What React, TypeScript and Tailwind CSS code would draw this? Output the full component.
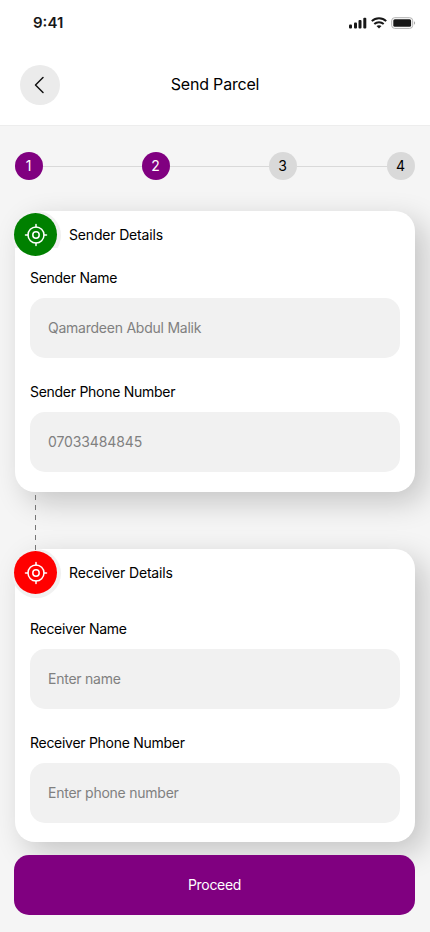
import type { ReactNode } from "react";

const Target = () => (
  <svg width="24" height="24" viewBox="0 0 24 24" fill="none" stroke="white" strokeWidth="1.5" strokeLinecap="round">
    <circle cx="12" cy="12" r="8" />
    <circle cx="12" cy="12" r="3.2" />
    <path d="M12 4V1.5M4 12H1.5M12 20v2.5M20 12h2.5" />
  </svg>
);

const Step = ({ n, active }: { n: number; active?: boolean }) => (
  <div className={`flex size-7 shrink-0 items-center justify-center rounded-full pr-px text-sm ${active ? "bg-[#800080] text-white" : "bg-[#d9d9d9] text-black"}`}>{n}</div>
);

const Line = ({ className }: { className: string }) => <div className={`mt-px h-px bg-[#d9d9d9] ${className}`} />;

const Field = ({ label, value, valueClass = "tracking-[-0.24px]" }: { label: string; value: string; valueClass?: string }) => (
  <div>
    <div className="h-5 text-sm leading-5 tracking-[-0.28px] whitespace-nowrap">{label}</div>
    <div className={`mt-2.5 flex h-[60px] items-center rounded-[15px] bg-[#f1f1f1] px-[18px] text-sm text-[#808080] ${valueClass}`}>{value}</div>
  </div>
);

const Card = ({ title, color, ringClass, className, children }: { title: string; color: string; ringClass: string; className: string; children: ReactNode }) => (
  <section className={`mx-[15px] rounded-[20px] bg-white px-[15px] shadow-[10px_10px_30px_rgba(0,0,0,0.2)] ${className}`}>
    <header className="relative -ml-4 flex h-12 items-start">
      <div className={`absolute top-0 -left-[2px] size-[49px] rounded-full bg-[#f1f1f1] ${ringClass}`} />
      <div className={`relative mt-[2px] flex size-[43px] items-center justify-center rounded-full ${color}`}>
        <Target />
      </div>
      <h2 className="ml-3 text-sm leading-[48px] tracking-[-0.17px]">{title}</h2>
    </header>
    {children}
  </section>
);

export default function App() {
  return (
    <main className="flex h-[932px] w-[430px] flex-col overflow-hidden bg-[#f5f5f5] font-['Inter','Liberation_Sans',sans-serif] text-black">
      <div className="h-[126px] shrink-0 border-b border-[#ededed] bg-white">
        <div className="flex h-[46px] items-center justify-between pr-[14px] pl-[33px]">
          <span className="text-[15px] font-semibold text-[#171717]">9:41</span>
          <div className="flex items-center gap-1">
            <svg width="18" height="12" viewBox="0 0 18 12" fill="#171717">
              <rect x="0" y="7.5" width="3" height="4" rx="1" />
              <rect x="5" y="5.5" width="3" height="6" rx="1" />
              <rect x="9.5" y="3" width="3" height="8.5" rx="1" />
              <rect x="14.3" y="0.7" width="3" height="10.8" rx="1" />
            </svg>
            <svg width="16" height="12" viewBox="0 0 16 12" fill="none" stroke="#171717" strokeWidth="2">
              <path d="M.8 4.1C4.8.3 11.2.3 15.2 4.1M3.3 7c2.7-2.5 6.7-2.5 9.4 0" />
              <path d="M5.5 9.1c1.5-1.2 3.5-1.2 5 0L8 11.6z" fill="#171717" stroke="none" />
            </svg>
            <svg width="25" height="12" viewBox="0 0 25 12" fill="none">
              <rect x=".7" y=".7" width="21" height="10.7" rx="3" stroke="#b0b0b0" />
              <rect x="2.3" y="2.3" width="17.8" height="7.5" rx="1.5" fill="#171717" />
              <path d="M23 4.3c1.5.6 1.5 2.9 0 3.5z" fill="#aaa" />
            </svg>
          </div>
        </div>
        <div className="grid h-[78px] grid-cols-[40px_1fr_40px] items-center px-5">
          <button className="flex size-10 items-center justify-center rounded-full bg-[#ebebeb]">
            <svg width="24" height="24" viewBox="0 0 24 24" fill="none" stroke="#111" strokeWidth="1.5" strokeLinecap="round" strokeLinejoin="round"><path d="M15 4.5 7.5 12l7.5 7.5" /></svg>
          </button>
          <h1 className="pb-0.5 text-center text-base tracking-[-0.2px]">Send Parcel</h1>
        </div>
      </div>
      <div className="mt-[26px] flex h-7 shrink-0 items-center px-[15px]">
        <Step n={1} active />
        <Line className="w-[99px]" />
        <Step n={2} active />
        <Line className="w-[99px]" />
        <Step n={3} />
        <Line className="w-[90px]" />
        <Step n={4} />
      </div>
      <Card title="Sender Details" color="bg-[#008000]" ringClass="[clip-path:inset(0_0_12px_0)]" className="mt-[31px] h-[281px] shrink-0">
        <div className="mt-[9px] flex flex-col gap-6">
          <Field label="Sender Name" value="Qamardeen Abdul Malik" />
          <Field label="Sender Phone Number" value="07033484845" valueClass="tracking-[-0.12px]" />
        </div>
      </Card>
      <div className="relative z-10 -mb-[2px] ml-[35px] h-[59px] w-px shrink-0 bg-[repeating-linear-gradient(to_bottom,transparent_0px,transparent_3px,#777_3px,#777_8px,transparent_8px,transparent_10px)]" />
      <Card title="Receiver Details" color="bg-[#ff0000]" ringClass="" className="h-[293px] shrink-0">
        <div className="mt-[22px] flex flex-col gap-6">
          <Field label="Receiver Name" value="Enter name" />
          <Field label="Receiver Phone Number" value="Enter phone number" />
        </div>
      </Card>
      <button className="z-10 mt-[13px] mr-[15px] ml-[14px] h-[60px] shrink-0 rounded-[15px] bg-[#800080] text-sm tracking-[-0.3px] text-white">Proceed</button>
    </main>
  );
}
